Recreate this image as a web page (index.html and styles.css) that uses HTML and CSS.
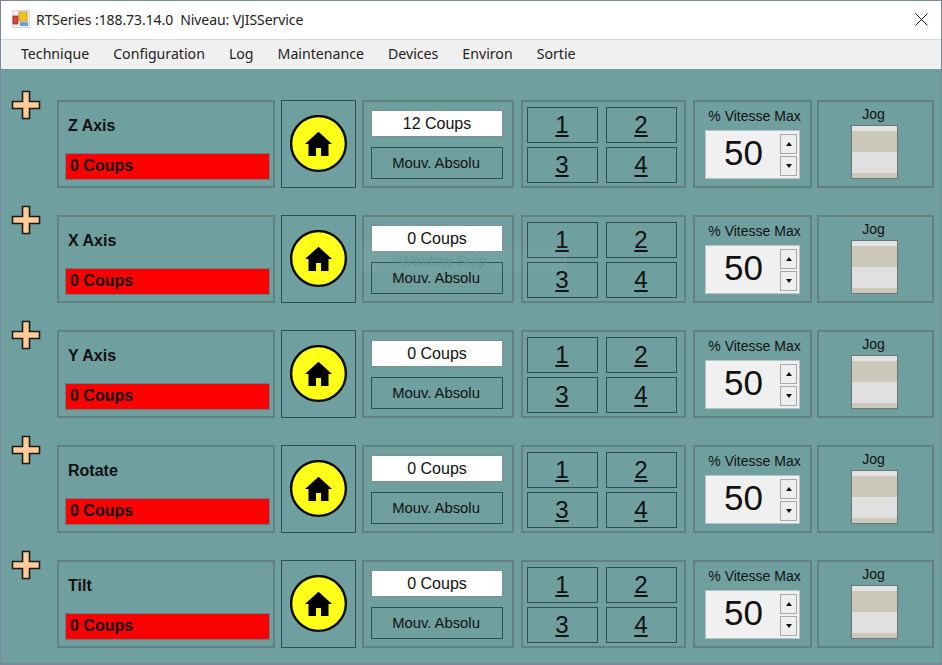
FILE: index.html
```html
<!DOCTYPE html>
<html lang="en">
<head>
  <meta charset="UTF-8" />
  <title>RTSeries</title>
  <link rel="stylesheet" href="styles.css">
</head>
<body>
  <svg width="0" height="0" class="defs">
    <symbol id="plus" viewBox="0 0 30 30">
      <path d="M11.5 1.5h7v10h10v7h-10v10h-7v-10h-10v-7h10z" fill="#ffcc99" stroke="#1a1a1a" stroke-width="1.6"/>
    </symbol>
    <symbol id="home" viewBox="0 0 58 58">
      <circle cx="28.5" cy="28.5" r="27.4" fill="#ffff1a" stroke="#0c0c0c" stroke-width="2.4"/>
      <path d="M28.5 16.7 42 29h-3.5v12H31v-8h-5v8h-7.5V29H15z" fill="#000"/>
    </symbol>
  </svg>

  <div class="window">
    <div class="titlebar">
      <svg class="app-icon" width="18" height="18" viewBox="0 0 18 18">
        <rect width="18" height="18" fill="#d6d6d6"/>
        <rect x="1" y="1" width="16" height="16" fill="#eee"/>
        <rect x="7" y="2" width="8" height="9" fill="#f2c21e" stroke="#b98a10" stroke-width=".7"/>
        <rect x="1" y="6" width="5" height="8" fill="#d9453a" stroke="#8e2a24" stroke-width=".7"/>
        <rect x="8" y="12" width="8" height="4" fill="#6f9fd8"/>
      </svg>
      <span class="title">RTSeries :188.73.14.0&nbsp; Niveau: VJISService</span>
      <svg class="close" width="13" height="13" viewBox="0 0 13 13">
        <path d="M.5.5l12 12M12.5.5l-12 12" stroke="#111" stroke-width="1" fill="none"/>
      </svg>
    </div>
    <nav class="menu">
      <span>Technique</span>
      <span>Configuration</span>
      <span>Log</span>
      <span>Maintenance</span>
      <span>Devices</span>
      <span>Environ</span>
      <span>Sortie</span>
    </nav>

    <main class="axes">
      <div class="snip">Window Snip</div>

      <section class="axis">
        <svg class="plus"><use href="#plus"/></svg>
        <div class="box status">
          <div class="axis-name">Z Axis</div>
          <div class="alarm">0 Coups</div>
        </div>
        <div class="home"><svg width="58" height="58"><use href="#home"/></svg></div>
        <div class="box move">
          <div class="count">12 Coups</div>
          <div class="btn absolu">Mouv. Absolu</div>
        </div>
        <div class="box presets">
          <div class="btn">1</div><div class="btn">2</div>
          <div class="btn">3</div><div class="btn">4</div>
        </div>
        <div class="box speed">
          <div class="cap">% Vitesse Max</div>
          <div class="spin">
            <span class="val">50</span>
            <div class="arrows"><div class="arrow"><i class="up"></i></div><div class="arrow"><i class="down"></i></div></div>
          </div>
        </div>
        <div class="box jog">
          <div class="cap">Jog</div>
          <div class="slider"></div>
        </div>
      </section>

      <section class="axis">
        <svg class="plus"><use href="#plus"/></svg>
        <div class="box status">
          <div class="axis-name">X Axis</div>
          <div class="alarm">0 Coups</div>
        </div>
        <div class="home"><svg width="58" height="58"><use href="#home"/></svg></div>
        <div class="box move">
          <div class="count">0 Coups</div>
          <div class="btn absolu">Mouv. Absolu</div>
        </div>
        <div class="box presets">
          <div class="btn">1</div><div class="btn">2</div>
          <div class="btn">3</div><div class="btn">4</div>
        </div>
        <div class="box speed">
          <div class="cap">% Vitesse Max</div>
          <div class="spin">
            <span class="val">50</span>
            <div class="arrows"><div class="arrow"><i class="up"></i></div><div class="arrow"><i class="down"></i></div></div>
          </div>
        </div>
        <div class="box jog">
          <div class="cap">Jog</div>
          <div class="slider"></div>
        </div>
      </section>

      <section class="axis">
        <svg class="plus"><use href="#plus"/></svg>
        <div class="box status">
          <div class="axis-name">Y Axis</div>
          <div class="alarm">0 Coups</div>
        </div>
        <div class="home"><svg width="58" height="58"><use href="#home"/></svg></div>
        <div class="box move">
          <div class="count">0 Coups</div>
          <div class="btn absolu">Mouv. Absolu</div>
        </div>
        <div class="box presets">
          <div class="btn">1</div><div class="btn">2</div>
          <div class="btn">3</div><div class="btn">4</div>
        </div>
        <div class="box speed">
          <div class="cap">% Vitesse Max</div>
          <div class="spin">
            <span class="val">50</span>
            <div class="arrows"><div class="arrow"><i class="up"></i></div><div class="arrow"><i class="down"></i></div></div>
          </div>
        </div>
        <div class="box jog">
          <div class="cap">Jog</div>
          <div class="slider"></div>
        </div>
      </section>

      <section class="axis">
        <svg class="plus"><use href="#plus"/></svg>
        <div class="box status">
          <div class="axis-name">Rotate</div>
          <div class="alarm">0 Coups</div>
        </div>
        <div class="home"><svg width="58" height="58"><use href="#home"/></svg></div>
        <div class="box move">
          <div class="count">0 Coups</div>
          <div class="btn absolu">Mouv. Absolu</div>
        </div>
        <div class="box presets">
          <div class="btn">1</div><div class="btn">2</div>
          <div class="btn">3</div><div class="btn">4</div>
        </div>
        <div class="box speed">
          <div class="cap">% Vitesse Max</div>
          <div class="spin">
            <span class="val">50</span>
            <div class="arrows"><div class="arrow"><i class="up"></i></div><div class="arrow"><i class="down"></i></div></div>
          </div>
        </div>
        <div class="box jog">
          <div class="cap">Jog</div>
          <div class="slider"></div>
        </div>
      </section>

      <section class="axis">
        <svg class="plus"><use href="#plus"/></svg>
        <div class="box status">
          <div class="axis-name">Tilt</div>
          <div class="alarm">0 Coups</div>
        </div>
        <div class="home"><svg width="58" height="58"><use href="#home"/></svg></div>
        <div class="box move">
          <div class="count">0 Coups</div>
          <div class="btn absolu">Mouv. Absolu</div>
        </div>
        <div class="box presets">
          <div class="btn">1</div><div class="btn">2</div>
          <div class="btn">3</div><div class="btn">4</div>
        </div>
        <div class="box speed">
          <div class="cap">% Vitesse Max</div>
          <div class="spin">
            <span class="val">50</span>
            <div class="arrows"><div class="arrow"><i class="up"></i></div><div class="arrow"><i class="down"></i></div></div>
          </div>
        </div>
        <div class="box jog">
          <div class="cap">Jog</div>
          <div class="slider"></div>
        </div>
      </section>
    </main>
  </div>
</body>
</html>
```

FILE: styles.css
```css
* {
  box-sizing: border-box;
}

html, body {
  margin: 0;
  height: 100%;
  overflow: hidden;
}

.defs {
  position: absolute;
}

.window {
  width: 942px;
  height: 665px;
  border: 1px solid #7b8a9a;
  border-bottom-width: 2px;
  display: flex;
  flex-direction: column;
  background: #6f9f9f;
  font-family: "Liberation Sans", Arial, sans-serif;
  color: #111;
}

/* Title bar */
.titlebar {
  height: 38px;
  flex: none;
  background: #fff;
  display: flex;
  align-items: center;
  padding: 0 13px 2px 11px;
  font-family: "Noto Sans", sans-serif;
  font-size: 14px;
  letter-spacing: -0.08px;
  color: #222;
}

.app-icon {
  margin-right: 6px;
}

.close {
  margin-left: auto;
}

/* Menu */
.menu {
  height: 30px;
  flex: none;
  background: #f0f0f0;
  border-top: 1px solid #d9d9d9;
  display: flex;
  align-items: center;
  gap: 24px;
  padding: 0 0 2px 20px;
  font-family: "Noto Sans", sans-serif;
  font-size: 14.15px;
  color: #222;
}

/* Axis rows */
.axes {
  position: relative;
  flex: 1;
  padding: 21px 7px 0 10px;
  display: flex;
  flex-direction: column;
  gap: 17px;
}

.axis {
  height: 98px;
  display: flex;
  align-items: flex-end;
}

.plus {
  width: 30px;
  height: 30px;
  align-self: flex-start;
  flex: none;
  margin-right: 16px;
}

.box {
  height: 88px;
  flex: none;
  border: 2px solid #648080;
}

.status {
  width: 218px;
  margin-right: 6px;
  padding: 15px 3px 0 6px;
}

.axis-name {
  font-size: 16px;
  font-weight: bold;
  line-height: 18px;
  padding-left: 3px;
  margin-bottom: 18px;
}

.alarm {
  height: 27px;
  background: #ff0000;
  border: 1px solid #648080;
  font-size: 16px;
  font-weight: bold;
  line-height: 23px;
  padding-left: 4px;
}

.home {
  width: 75px;
  height: 88px;
  flex: none;
  margin-right: 6px;
  border: 1px solid #2f4f4f;
  display: flex;
  align-items: center;
  justify-content: center;
}

.move {
  width: 152px;
  margin-right: 7px;
  padding: 8px 9px 0 7px;
}

.count {
  height: 27px;
  background: #fff;
  border: 1px solid #7f8f8f;
  text-align: center;
  font-size: 16px;
  line-height: 25px;
  margin-bottom: 10px;
}

.btn {
  border: 1px solid #2f4f4f;
  display: flex;
  align-items: center;
  justify-content: center;
}

.absolu {
  height: 32px;
  font-size: 14.8px;
  padding: 0 2px 1px 0;
}

.presets {
  width: 165px;
  margin-right: 7px;
  padding: 5px 4px 3px 4px;
  display: grid;
  grid-template-columns: 71px 71px;
  grid-template-rows: 36px 36px;
  column-gap: 8px;
  row-gap: 4px;
}

.presets .btn {
  font-size: 24px;
  text-decoration: underline;
  padding-right: 1px;
}

.speed {
  width: 119px;
  margin-right: 5px;
  padding: 7px 0 0 10px;
}

.cap {
  font-size: 14px;
  line-height: 14px;
  text-align: center;
}

.speed .cap {
  padding-right: 6px;
  margin-bottom: 7px;
}

.spin {
  width: 95px;
  height: 49px;
  background: #f0f0f0;
  border: 1px solid #b8c4c4;
  display: flex;
  align-items: center;
  padding-right: 2px;
}

.val {
  flex: 1;
  text-align: center;
  font-size: 35px;
  padding-left: 1px;
  margin-top: -4px;
}

.arrows {
  display: flex;
  flex-direction: column;
  gap: 2px;
}

.arrow {
  width: 17px;
  height: 20px;
  background: #eee;
  border: 1px solid #a8a8a8;
  display: flex;
  align-items: center;
  justify-content: center;
}

.arrow i {
  width: 0;
  height: 0;
  border-left: 3px solid transparent;
  border-right: 3px solid transparent;
}

.arrow .up {
  border-bottom: 4px solid #111;
}

.arrow .down {
  border-top: 4px solid #111;
}

.jog {
  width: 117px;
  padding-top: 5px;
}

.jog .cap {
  padding-right: 4px;
  margin-bottom: 4px;
}

.slider {
  width: 47px;
  height: 54px;
  margin-left: 32px;
  border: 1px solid #6c7676;
  background: linear-gradient(to bottom,
    #e3e3e3 0, #e3e3e3 5px,
    #ccc8ba 5px, #ccc8ba 26px,
    #e0e0e0 26px, #e0e0e0 47px,
    #ccc8ba 47px);
}

/* leftover capture-tool overlay */
.snip {
  position: absolute;
  left: 361px;
  top: 178px;
  width: 205px;
  height: 25px;
  padding-left: 37px;
  background: rgba(255, 255, 255, .04);
  font-size: 15px;
  line-height: 28px;
  color: #659595;
}
```
